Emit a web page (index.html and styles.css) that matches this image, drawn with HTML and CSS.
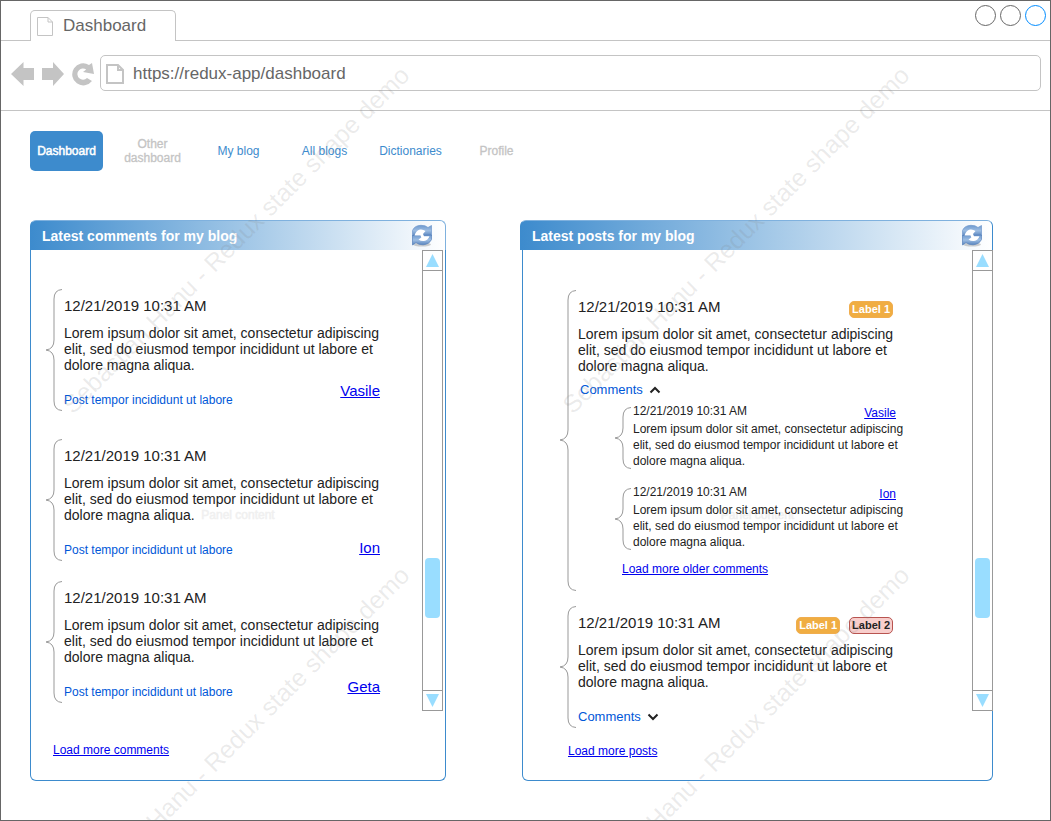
FILE: index.html
```html
<!DOCTYPE html>
<html lang="en">
<head>
<meta charset="utf-8">
<title>Dashboard</title>
<link rel="stylesheet" href="styles.css">
</head>
<body>
<svg class="defs" width="0" height="0" aria-hidden="true">
  <defs>
    <linearGradient id="blue" x1="0" y1="0" x2="0" y2="1">
      <stop offset="0" stop-color="#6d99cf"/><stop offset="0.5" stop-color="#9dbde2"/><stop offset="1" stop-color="#5582bd"/>
    </linearGradient>
    <symbol id="brace-entry" viewBox="0 0 16 122"><path d="M16 .5Q8 1 8 10V51Q8 60 0 61Q8 62 8 71V112Q8 121 16 121.500"/></symbol>
    <symbol id="brace-thread" viewBox="0 0 16 301"><path d="M16 .5Q8 1 8 10V140Q8 149 0 150Q8 151 8 160V291Q8 300 16 300.500"/></symbol>
    <symbol id="brace-reply" viewBox="0 0 16 62"><path d="M16 .5Q8 1 8 10V21Q8 30 0 31Q8 32 8 41V52Q8 61 16 61.500"/></symbol>
    <symbol id="sync" viewBox="0 0 22 24">
      <ellipse cx="11" cy="20.500" rx="9" ry="2" fill="#000" opacity=".18"/>
      <path d="M1.500 12V6.500Q3.500 1.500 10 1.300Q14.500 1.300 17 3.500L20.500 1.500V11.500H11Z" fill="url(#blue)" stroke="#6f97cb" stroke-width=".7"/>
      <path d="M20.500 11V15.500Q18 20.500 12 20.800Q7.500 20.800 5 18.500L1.500 21V11.500H11Z" fill="url(#blue)" stroke="#5580ba" stroke-width=".7"/>
      <path d="M3.500 11.500Q5 6.500 9 5.500Q12 5 14.500 7L12 10L13 12.300H18.500Q17 16.500 13 17Q10 17.300 7.500 15.500L10.300 13.500L9.500 11.500Z" fill="#fff"/>
    </symbol>
  </defs>
</svg>
<div class="window">
  <header class="titlebar">
    <div class="tab">
      <svg class="tab-icon" viewBox="0 0 16 19"><path d="M.5 .5H11L15.500 5V18.500H.5ZM11 .5V5H15.500"/></svg>
      <span>Dashboard</span>
    </div>
    <div class="window-controls">
      <button class="dot" aria-label="Minimize"></button>
      <button class="dot" aria-label="Maximize"></button>
      <button class="dot dot-active" aria-label="Close"></button>
    </div>
  </header>
  <div class="toolbar">
    <button class="tool" aria-label="Back"><svg width="24" height="26" viewBox="0 0 24 26"><path d="M0 13L12.500 1V7H23V19H12.500V25Z"/></svg></button>
    <button class="tool" aria-label="Forward"><svg width="24" height="26" viewBox="0 0 24 26"><path d="M23 13L12 1V7H1V19H12V25Z"/></svg></button>
    <button class="tool" aria-label="Reload"><svg width="24" height="26" viewBox="0 0 24 26"><path d="M18 4L21 2L23 13L12 11L15.200 8.500A5.600 5.600 0 1 0 16 17L21 20A11 11 0 1 1 18 4Z"/></svg></button>
    <div class="address">
      <svg class="page-icon" viewBox="0 0 18 20"><path d="M1 1H12L17 6V19H1ZM12 1V6H17"/></svg>
      <input type="text" aria-label="Address" value="https://redux-app/dashboard">
    </div>
  </div>
  <main class="page">
    <nav class="menu">
      <a class="menu-current" href="#">Dashboard</a>
      <a class="menu-muted" href="#">Other dashboard</a>
      <a href="#">My blog</a>
      <a href="#">All blogs</a>
      <a href="#">Dictionaries</a>
      <a class="menu-muted" href="#">Profile</a>
    </nav>
    <div class="panels">
      <section class="panel">
        <div class="panel-head"><h2>Latest comments for my blog</h2>
          <button class="sync" aria-label="Refresh comments"><svg><use href="#sync"/></svg></button></div>
        <div class="panel-body">
          <span class="ghost">Panel content</span>
          <div class="list">
            <article class="entry entry-loose">
              <svg class="brace"><use href="#brace-entry"/></svg>
              <div class="content">
                <div class="entry-head"><time>12/21/2019 10:31 AM</time></div>
                <p>Lorem ipsum dolor sit amet, consectetur adipiscing elit, sed do eiusmod tempor incididunt ut labore et dolore magna aliqua.</p>
                <div class="entry-foot"><a class="source" href="#">Post tempor incididunt ut labore</a><a class="author" href="#">Vasile</a></div>
              </div>
            </article>
            <article class="entry">
              <svg class="brace"><use href="#brace-entry"/></svg>
              <div class="content">
                <div class="entry-head"><time>12/21/2019 10:31 AM</time></div>
                <p>Lorem ipsum dolor sit amet, consectetur adipiscing elit, sed do eiusmod tempor incididunt ut labore et dolore magna aliqua.</p>
                <div class="entry-foot"><a class="source" href="#">Post tempor incididunt ut labore</a><a class="author author-low" href="#">Ion</a></div>
              </div>
            </article>
            <article class="entry">
              <svg class="brace"><use href="#brace-entry"/></svg>
              <div class="content">
                <div class="entry-head"><time>12/21/2019 10:31 AM</time></div>
                <p>Lorem ipsum dolor sit amet, consectetur adipiscing elit, sed do eiusmod tempor incididunt ut labore et dolore magna aliqua.</p>
                <div class="entry-foot"><a class="source" href="#">Post tempor incididunt ut labore</a><a class="author author-mid" href="#">Geta</a></div>
              </div>
            </article>
            <a class="more more-comments" href="#">Load more comments</a>
          </div>
          <div class="scrollbar">
            <button aria-label="Scroll comments up"><svg viewBox="0 0 13 13"><path d="M6.500 0L13 13H0Z"/></svg></button>
            <div class="track"><div class="thumb"></div></div>
            <button aria-label="Scroll comments down"><svg viewBox="0 0 13 13"><path d="M0 0H13L6.500 13Z"/></svg></button>
          </div>
        </div>
      </section>
      <section class="panel panel-posts">
        <div class="panel-head"><h2>Latest posts for my blog</h2>
          <button class="sync" aria-label="Refresh posts"><svg><use href="#sync"/></svg></button></div>
        <div class="panel-body">
          <span class="ghost">Panel content</span>
          <div class="list">
            <article class="entry post">
              <svg class="brace brace-thread"><use href="#brace-thread"/></svg>
              <div class="content">
                <div class="entry-head"><time>12/21/2019 10:31 AM</time><span class="labels"><span class="label">Label 1</span></span></div>
                <p>Lorem ipsum dolor sit amet, consectetur adipiscing elit, sed do eiusmod tempor incididunt ut labore et dolore magna aliqua.</p>
                <button class="toggle" aria-expanded="true">Comments <svg viewBox="0 0 12 8"><path d="M1.500 6.500L6 2L10.500 6.500"/></svg></button>
                <div class="replies">
                  <article class="reply">
                    <svg class="brace brace-reply"><use href="#brace-reply"/></svg>
                    <div class="content">
                      <div class="reply-head"><time>12/21/2019 10:31 AM</time><a href="#">Vasile</a></div>
                      <p>Lorem ipsum dolor sit amet, consectetur adipiscing elit, sed do eiusmod tempor incididunt ut labore et dolore magna aliqua.</p>
                    </div>
                  </article>
                  <article class="reply">
                    <svg class="brace brace-reply"><use href="#brace-reply"/></svg>
                    <div class="content">
                      <div class="reply-head"><time>12/21/2019 10:31 AM</time><a href="#">Ion</a></div>
                      <p>Lorem ipsum dolor sit amet, consectetur adipiscing elit, sed do eiusmod tempor incididunt ut labore et dolore magna aliqua.</p>
                    </div>
                  </article>
                </div>
                <a class="more more-replies" href="#">Load more older comments</a>
              </div>
            </article>
            <article class="entry post">
              <svg class="brace"><use href="#brace-entry"/></svg>
              <div class="content">
                <div class="entry-head"><time>12/21/2019 10:31 AM</time><span class="labels"><span class="label">Label 1</span><span class="label label-red">Label 2</span></span></div>
                <p>Lorem ipsum dolor sit amet, consectetur adipiscing elit, sed do eiusmod tempor incididunt ut labore et dolore magna aliqua.</p>
                <button class="toggle toggle-closed" aria-expanded="false">Comments <svg viewBox="0 0 12 8"><path d="M1.500 1.500L6 6L10.500 1.500"/></svg></button>
              </div>
            </article>
            <a class="more more-posts" href="#">Load more posts</a>
          </div>
          <div class="scrollbar">
            <button aria-label="Scroll posts up"><svg viewBox="0 0 13 13"><path d="M6.500 0L13 13H0Z"/></svg></button>
            <div class="track"><div class="thumb"></div></div>
            <button aria-label="Scroll posts down"><svg viewBox="0 0 13 13"><path d="M0 0H13L6.500 13Z"/></svg></button>
          </div>
        </div>
      </section>
    </div>
  </main>
  <svg class="watermark" aria-hidden="true">
    <g id="mark"><text transform="translate(72 414) rotate(-45)">Sebastian Hanu - Redux state shape demo</text></g>
    <use href="#mark" x="500"/>
    <use href="#mark" y="500"/>
    <use href="#mark" x="500" y="500"/>
  </svg>
</div>
</body>
</html>
```

FILE: styles.css
```css
* { box-sizing: border-box; }
body {
  margin: 0;
  background: #fff;
  color: #222;
  font-family: "Liberation Sans", Arial, sans-serif;
  font-size: 12px;
  line-height: 14px;
}
h2, p { margin: 0; }
svg { display: block; }
button { padding: 0; border: 0; background: none; font: inherit; color: inherit; cursor: pointer; }
.defs { position: absolute; }

.window {
  position: relative;
  min-height: 100vh;
  overflow: hidden;
  border: 1px solid #666;
}

/* Browser chrome */
.titlebar {
  display: flex;
  justify-content: space-between;
  align-items: flex-end;
  height: 40px;
  padding: 0 4px 0 29px;
  border-bottom: 1px solid #c4c4c4;
}
.tab {
  display: flex;
  align-items: center;
  gap: 10px;
  width: 146px;
  height: 31px;
  margin-bottom: -1px;
  padding-left: 6px;
  border: 1px solid #c4c4c4;
  border-bottom: 0;
  border-radius: 5px 5px 0 0;
  background: #fff;
  color: #666;
  font-size: 17px;
  line-height: 20px;
}
.tab-icon { width: 16px; height: 19px; fill: none; stroke: #c4c4c4; }
.window-controls { display: flex; gap: 4px; align-self: flex-start; padding-top: 4px; }
.dot { width: 21px; height: 21px; border: 1px solid #666; border-radius: 50%; }
.dot-active { border-color: #008cff; }
.toolbar {
  display: flex;
  align-items: center;
  padding: 14px 9px 19px 10px;
  border-bottom: 1px solid #c4c4c4;
}
.tool { margin-right: 6px; padding-top: 2px; fill: #c4c4c4; }
.tool + .tool + .tool { margin-right: 5px; }
.address {
  display: flex;
  flex: 1;
  align-items: center;
  gap: 9px;
  height: 36px;
  padding: 2px 5px 0;
  border: 1px solid #c4c4c4;
  border-radius: 5px;
}
.page-icon { width: 18px; height: 20px; fill: none; stroke: #c4c4c4; stroke-width: 2; }
.address input {
  flex: 1;
  padding: 0;
  border: 0;
  outline: 0;
  background: none;
  color: #666;
  font: 17px/20px "Liberation Sans", Arial, sans-serif;
}

/* Menu */
.page { padding: 20px 57px 39px 29px; }
.menu { display: grid; grid-template-columns: repeat(6, 73px); gap: 13px; }
.menu a {
  display: flex;
  align-items: center;
  justify-content: center;
  height: 40px;
  border-radius: 5px;
  color: #3d8bcd;
  text-align: center;
  text-decoration: none;
}
.menu .menu-current { background: #3d8bcd; color: #fff; -webkit-text-stroke: 0.5px #fff; }
.menu .menu-muted { color: #c4c4c4; -webkit-text-stroke: 0.3px #c4c4c4; }

/* Panels */
.panels {
  display: grid;
  grid-template-columns: 416fr 473fr;
  gap: 74px;
  margin-top: 49px;
}
.panel-head {
  display: flex;
  align-items: center;
  justify-content: space-between;
  height: 30px;
  padding: 0 12px 0 11px;
  border: 1px solid #7fb1de;
  border-bottom: 0;
  border-left-color: #3d8bcd;
  border-radius: 6px 6px 0 0;
  background: linear-gradient(90deg, #3d8bcd, #fff);
}
.panel-head h2 { color: #fff; font-size: 14px; line-height: 16px; }
.sync svg { width: 22px; height: 24px; }
.panel-body {
  position: relative;
  display: flex;
  align-items: flex-start;
  padding-right: 2px;
  border: 1px solid #3d8bcd;
  border-top: 0;
  border-radius: 0 0 6px 6px;
}
.panel-posts .panel-head { padding-right: 9px; border-right-color: #3d8bcd; }
.panel-posts .panel-body { margin-left: 2px; padding-right: 0; }
.panel-posts .scrollbar { margin-right: -1px; }
.ghost {
  position: absolute;
  inset: 0;
  z-index: -1;
  display: grid;
  place-items: center;
  color: #f0f0f0;
  -webkit-text-stroke: 0.5px #f0f0f0;
}
.list { flex: 1; padding: 39px 42px 23px 15px; }
.panel-posts .list { padding: 40px 65px 22px 37px; }

/* Entries */
.entry, .reply { display: grid; grid-template-columns: 16px 1fr; column-gap: 2px; }
.entry { margin-bottom: 20px; }
.entry-loose { margin-bottom: 28px; }
.post { margin-bottom: 15px; }
.brace { width: 16px; height: 122px; fill: none; stroke: #999; }
.brace-thread { height: 301px; }
.brace-reply { height: 62px; margin-top: 3px; }
.entry > .content { padding-top: 8px; }
.entry-head { display: flex; justify-content: space-between; height: 20px; font-size: 15px; line-height: 18px; }
.entry p { margin-top: 8px; font-size: 14px; line-height: 16px; }
.entry-foot { display: flex; justify-content: space-between; height: 25px; margin-top: 9px; }
.source { align-self: flex-end; color: #0057d8; text-decoration: none; }
.author { font-size: 15px; line-height: 18px; }
.author-low { align-self: flex-end; }
.author-mid { align-self: center; }
a { color: #00e; }
.labels { display: flex; align-items: flex-end; gap: 9px; padding-right: 14px; }
.label {
  padding: 0 2px;
  border: 1px solid #f0ad4e;
  border-radius: 5px;
  background: #f0ad42;
  color: #fff;
  font-size: 11px;
  font-weight: bold;
  line-height: 15px;
}
.label-red { border-color: #b85450; background: #f8cecc; color: #222; }
.toggle {
  display: flex;
  align-items: center;
  gap: 6px;
  margin-top: 8px;
  padding-left: 2px;
  color: #0057d8;
  font-size: 13px;
  line-height: 16px;
}
.toggle-closed { margin-top: 19px; padding-left: 0; }
.toggle svg { width: 12px; height: 8px; fill: none; stroke: #222; stroke-width: 2; }
.replies { display: grid; gap: 16px; margin: 6px 0 0 37px; }
.reply-head { display: flex; justify-content: space-between; padding-right: 11px; line-height: 14px; }
.reply-head a { margin-top: 2px; }
.reply-head time { margin-bottom: 2px; }
.reply p { margin-top: 1px; font-size: 12px; }
.more { display: block; width: max-content; }
.more-comments { margin: 40px 0 0 7px; }
.more-replies { margin: 12px 0 0 44px; }
.more-posts { margin: 16px 0 0 8px; }

/* Scrollbar */
.scrollbar {
  display: flex;
  flex-direction: column;
  width: 21px;
  height: 461px;
  border: 1px solid #999;
  background: #fff;
}
.scrollbar button { display: grid; place-items: center; height: 19px; }
.scrollbar svg { width: 13px; height: 13px; fill: #99ddff; }
.track { flex: 1; padding: 287px 2px 0; border: solid #999; border-width: 1px 0; }
.thumb { height: 60px; border-radius: 4px; background: #99ddff; }

.watermark {
  position: absolute;
  inset: 0;
  width: 100%;
  height: 100%;
  pointer-events: none;
  fill: #808080;
  fill-opacity: .16;
  font-size: 25px;
}
```
